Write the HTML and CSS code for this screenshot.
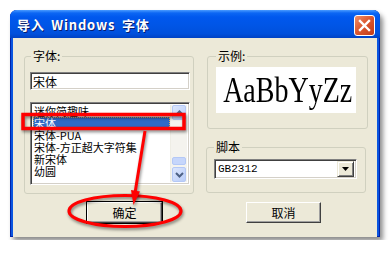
FILE: index.html
```html
<!DOCTYPE html>
<html lang="zh-CN">

<head>
    <meta charset="UTF-8">
    <meta name="viewport" content="width=device-width, initial-scale=1.0">
    <title>导入 Windows 字体</title>
    <link rel="stylesheet" href="styles.css">
</head>

<body>
    <div class="window">
        <div class="titlebar">
            <span class="title">导入 Windows 字体</span>
            <button class="close" type="button" aria-label="关闭">
                <svg width="13" height="13" viewBox="0 0 13 13">
                    <path d="M2 2 L11 11 M11 2 L2 11" stroke="#fff" stroke-width="2.4" stroke-linecap="square" />
                </svg>
            </button>
        </div>

        <div class="client">
            <div class="groups">
                <fieldset class="group group-font">
                    <legend>字体:</legend>
                    <input class="font-name" type="text" value="宋体">
                    <div class="listbox">
                        <ul class="items">
                            <li>迷你简趣味</li>
                            <li class="selected">宋体</li>
                            <li>宋体-PUA</li>
                            <li>宋体-方正超大字符集</li>
                            <li>新宋体</li>
                            <li>幼圆</li>
                        </ul>
                        <div class="scrollbar">
                            <span class="sb-btn">
                                <svg width="9" height="6" viewBox="0 0 9 6">
                                    <path d="M1 5 L4.5 1.5 L8 5" fill="none" stroke="#4D6185" stroke-width="2" />
                                </svg>
                            </span>
                            <span class="sb-track"></span>
                            <span class="sb-thumb"></span>
                            <span class="sb-btn">
                                <svg width="9" height="6" viewBox="0 0 9 6">
                                    <path d="M1 1 L4.5 4.5 L8 1" fill="none" stroke="#4D6185" stroke-width="2" />
                                </svg>
                            </span>
                        </div>
                    </div>
                </fieldset>

                <div class="right-col">
                    <fieldset class="group group-sample">
                        <legend>示例:</legend>
                        <div class="sample"><span class="sample-text">AaBbYyZz</span></div>
                    </fieldset>
                    <fieldset class="group group-script">
                        <legend>脚本</legend>
                        <div class="combo">
                            <span class="combo-value">GB2312</span>
                            <span class="combo-btn">
                                <svg width="7" height="4" viewBox="0 0 7 4">
                                    <path d="M0 0 H7 L3.5 4 Z" fill="#000" />
                                </svg>
                            </span>
                        </div>
                    </fieldset>
                </div>
            </div>

            <div class="buttons">
                <button class="btn btn-default" type="button">确定</button>
                <button class="btn" type="button">取消</button>
            </div>
        </div>
    </div>

    <!-- red marks drawn over the screenshot -->
    <svg class="marks" width="392" height="253" viewBox="0 0 392 253">
        <g class="mark" fill="none" stroke="#FF0000" stroke-width="3.5">
            <rect x="23" y="114.5" width="161" height="14" />
            <line x1="145" y1="131" x2="135" y2="193" stroke-width="3" />
            <ellipse cx="125" cy="211" rx="56" ry="15.5" stroke-width="3.2" />
        </g>
        <polygon class="mark" points="131,190 140,191.5 133.5,205" fill="#FF0000" />
    </svg>
</body>

</html>
```

FILE: styles.css
```css
body {
    margin: 0;
    background: #fff;
    font-family: 'Noto Sans CJK SC', 'Liberation Sans', sans-serif;
    font-size: 12px;
    color: #000;
}

.window {
    position: relative;
    width: 370px;
    margin: 10px 0 0 10px;
    border-radius: 7px 7px 0 0;
    background: #0A55E0;
    box-shadow: inset 1px 0 #0022A8, inset -1px 0 #0022A8, inset 0 -1px #0022A8, 3px 4px 5px rgba(0, 0, 0, .45);
}

.titlebar {
    height: 28px;
    display: flex;
    align-items: center;
    justify-content: space-between;
    padding: 0 5px 0 7px;
    border-radius: 7px 7px 0 0;
    background: linear-gradient(#4A9BFF 0, #0C67F4 3px, #0058EE 7px, #0055E6 55%, #0050DC 85%, #0042C4 100%);
}

.title {
    color: #fff;
    font-weight: bold;
    font-size: 13px;
    letter-spacing: 0.8px;
    word-spacing: 3px;
    white-space: pre;
    text-shadow: 1px 1px #0A1E6E;
}

.close {
    width: 21px;
    height: 21px;
    padding: 0;
    margin-top: 2px;
    display: flex;
    align-items: center;
    justify-content: center;
    border: 1px solid #fff;
    border-radius: 3px;
    background: linear-gradient(135deg, #F0906A 0, #DC5A32 45%, #C23A16 100%);
}

.client {
    height: 199px;
    margin: 0 3px 3px;
    padding-top: 11px;
    box-sizing: border-box;
    background: #ECE9D8;
}

.groups {
    display: grid;
    grid-template-columns: 170px 161px;
    column-gap: 13px;
    padding-left: 11px;
}

.group {
    margin: 0;
    min-width: 0;
    box-sizing: border-box;
    border: 1px solid #D0D0BF;
    border-radius: 3px;
}

.group legend {
    padding: 0 2px;
    line-height: 14px;
    font-size: 12px;
}

.group-font {
    height: 145px;
    padding: 9px 2px 0 5px;
}

.group-font legend {
    margin-left: 1px;
}

.right-col {
    display: flex;
    flex-direction: column;
    gap: 11px;
}

.group-sample {
    height: 80px;
    padding: 4px 0 0 8px;
}

.group-script {
    height: 53px;
    margin: 0 2px 0 -1px;
    padding: 5px 0 0 7px;
}

.font-name,
.listbox,
.combo {
    box-sizing: border-box;
    border: 1px solid;
    border-color: #808080 #fff #fff #808080;
    box-shadow: inset 1px 1px #404040, inset -1px -1px #D4D0C8;
    background: #fff;
}

.font-name {
    display: block;
    width: 160px;
    height: 18px;
    padding: 0 2px;
    font-family: 'Noto Sans CJK SC', sans-serif;
    font-size: 12px;
    outline: none;
}

.listbox {
    width: 160px;
    height: 83px;
    margin-top: 12px;
    padding: 2px;
    display: flex;
    overflow: hidden;
}

.items {
    flex: 1;
    list-style: none;
    margin: 0;
    padding: 0;
}

.items li {
    height: 12px;
    line-height: 12px;
    font-size: 11px;
    padding-left: 1px;
    white-space: nowrap;
}

.items li.selected {
    background: #316AC5;
    color: #fff;
    outline: 1px dotted #E0B060;
    outline-offset: -1px;
}

.scrollbar {
    width: 16px;
    display: flex;
    flex-direction: column;
    background: #F4F3EE;
    border-left: 1px solid #EEEDE5;
}

.sb-btn {
    height: 15px;
    margin: 0 1px;
    display: flex;
    align-items: center;
    justify-content: center;
    box-sizing: border-box;
    border: 1px solid #B4C8F6;
    border-radius: 2px;
    background: linear-gradient(135deg, #DCE6FD, #BACDF8);
}

.sb-track {
    flex: 1;
}

.sb-thumb {
    height: 6px;
    margin: 0 1px 2px;
    border: 1px solid #B4C8F6;
    border-radius: 2px;
    background: #C6D6FB;
}

.sample {
    width: 140px;
    height: 46px;
    display: flex;
    align-items: center;
    justify-content: center;
    background: #fff;
    overflow: hidden;
}

.sample-text {
    display: inline-block;
    font-family: 'Liberation Serif', serif;
    font-size: 35px;
    line-height: 1;
    transform: scaleX(0.8);
    margin-left: 4px;
}

.combo {
    width: 143px;
    height: 20px;
    display: flex;
    align-items: center;
    justify-content: space-between;
    padding: 2px;
}

.combo-value {
    padding-left: 1px;
    font-family: 'Liberation Mono', monospace;
    font-size: 11px;
}

.combo-btn {
    width: 17px;
    height: 16px;
    display: flex;
    align-items: center;
    justify-content: center;
    box-sizing: border-box;
    background: #ECE9D8;
    border: 1px solid;
    border-color: #ECE9D8 #404040 #404040 #ECE9D8;
    box-shadow: inset 1px 1px #fff, inset -1px -1px #808080;
}

.buttons {
    display: flex;
    gap: 84px;
    padding-left: 74px;
    margin-top: 8px;
}

.btn {
    width: 75px;
    height: 21px;
    padding: 0;
    box-sizing: border-box;
    background: #ECE9D8;
    border: 1px solid;
    border-color: #fff #404040 #404040 #fff;
    box-shadow: inset -1px -1px #A0A0A0;
    font-family: 'Noto Sans CJK SC', sans-serif;
    font-size: 12px;
    color: #000;
}

.btn-default {
    outline: 1px solid #000;
}

.marks {
    position: absolute;
    top: 0;
    left: 0;
    pointer-events: none;
}

.mark {
    filter: drop-shadow(1px 2px 1.5px rgba(0, 0, 0, .45));
}
```
